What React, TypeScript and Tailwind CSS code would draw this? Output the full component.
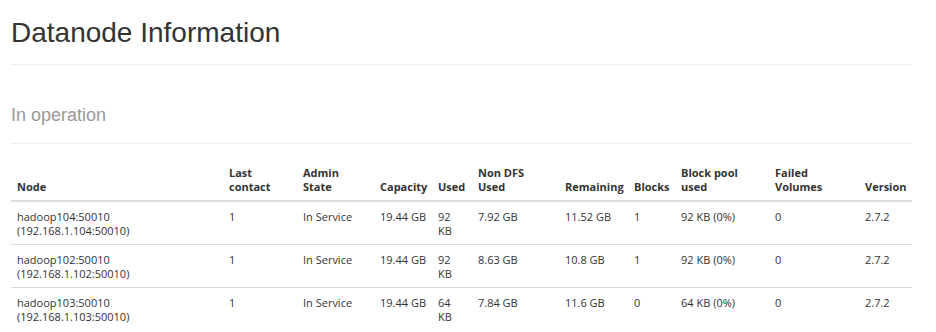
const cols = [
  { label: ['', 'Node'], w: 'w-[212px]' },
  { label: ['Last', 'contact'], w: 'w-[74px]' },
  { label: ['Admin', 'State'], w: 'w-[77px]' },
  { label: ['', 'Capacity'], w: 'w-[58px]' },
  { label: ['', 'Used'], w: 'w-[40px]' },
  { label: ['Non DFS', 'Used'], w: 'w-[87px]' },
  { label: ['', 'Remaining'], w: 'w-[69px]' },
  { label: ['', 'Blocks'], w: 'w-[47px]' },
  { label: ['Block pool', 'used'], w: 'w-[94px]' },
  { label: ['Failed', 'Volumes'], w: 'w-[90px]' },
  { label: ['', 'Version'], w: 'w-[53px]' },
]

const rows = [
  ['hadoop104:50010', '192.168.1.104:50010', '92', '7.92 GB', '11.52 GB', '1', '92 KB (0%)'],
  ['hadoop102:50010', '192.168.1.102:50010', '92', '8.63 GB', '10.8 GB', '1', '92 KB (0%)'],
  ['hadoop103:50010', '192.168.1.103:50010', '64', '7.84 GB', '11.6 GB', '0', '64 KB (0%)'],
]

export default function App() {
  return (
    <div className="w-[936px] h-[332px] overflow-hidden bg-white pl-[11px] pr-[24px]">
      <h1 className="pt-[17px] pb-[15px] border-b border-[#eeeeee] text-[28px] leading-[32px] text-[#333333] font-['Liberation_Sans',Arial,sans-serif]">
        Datanode Information
      </h1>
      <h2 className="mt-[40px] pb-[18px] border-b border-[#eeeeee] text-[18px] leading-[20px] text-[#999999] font-['Liberation_Sans',Arial,sans-serif]">
        In operation
      </h2>
      <table className="mt-[18px] w-[901px] table-fixed border-collapse text-[11px] leading-[14px] text-[#333333] font-['Open_Sans',sans-serif]">
        <thead>
          <tr className="border-b-2 border-[#dddddd]">
            {cols.map((c, i) => (
              <th key={i} className={`${c.w} px-[6px] pt-[4px] pb-[6px] text-left align-bottom font-bold`}>
                {c.label[0] && <div>{c.label[0]}</div>}
                <div>{c.label[1]}</div>
              </th>
            ))}
          </tr>
        </thead>
        <tbody>
          {rows.map((r, i) => (
            <tr key={i} className="border-t border-[#dddddd] first:border-t-0">
              <td className="px-[6px] pt-[8px] pb-[6px] align-top">
                <div>{r[0]}</div>
                <div>({r[1]})</div>
              </td>
              <td className="px-[6px] pt-[8px] align-top">1</td>
              <td className="px-[6px] pt-[8px] align-top">In Service</td>
              <td className="px-[6px] pt-[8px] align-top">19.44 GB</td>
              <td className="px-[6px] pt-[8px] align-top">
                <div>{r[2]}</div>
                <div>KB</div>
              </td>
              <td className="px-[6px] pt-[8px] align-top">{r[3]}</td>
              <td className="px-[6px] pt-[8px] align-top">{r[4]}</td>
              <td className="px-[6px] pt-[8px] align-top">{r[5]}</td>
              <td className="px-[6px] pt-[8px] align-top">{r[6]}</td>
              <td className="px-[6px] pt-[8px] align-top">0</td>
              <td className="px-[6px] pt-[8px] align-top">2.7.2</td>
            </tr>
          ))}
        </tbody>
      </table>
    </div>
  )
}
